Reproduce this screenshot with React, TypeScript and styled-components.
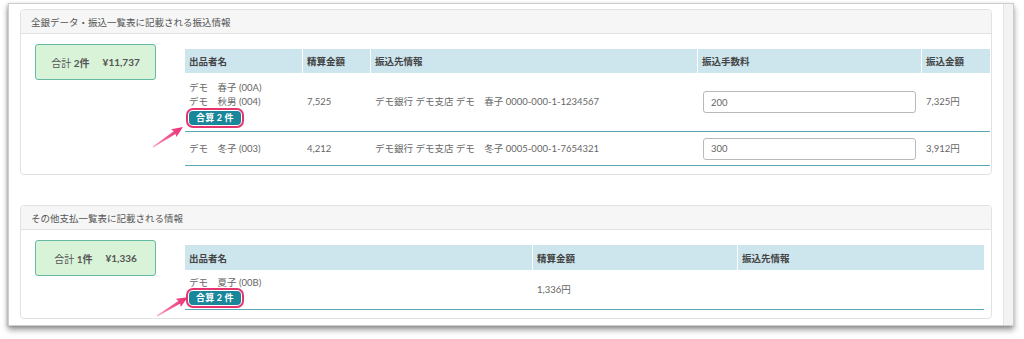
import React from 'react';
import styled, { createGlobalStyle } from 'styled-components';

const Global = createGlobalStyle`
  html, body { margin: 0; padding: 0; background: #fff; }
  body {
    font-family: Lato, "Noto Sans CJK JP", sans-serif;
    font-size: 9.5px;
    color: #666;
  }
  * { box-sizing: border-box; }
`;

const Stage = styled.div`
  position: relative;
  width: 1024px;
  height: 339px;
  overflow: hidden;
  padding: 3px 0 0 8px;
`;

const Frame = styled.div`
  width: 1006px;
  height: 323px;
  border: 1px solid #cdcdcd;
  background: #fff;
  box-shadow: 0 4px 6px rgba(0, 0, 0, 0.38), -1px 1px 3px rgba(0, 0, 0, 0.18);
  display: flex;
`;

const Content = styled.div`
  flex: 1;
  padding: 5px 11px 0 11px;
  display: flex;
  flex-direction: column;
  gap: 30px;
`;

const Scrollbar = styled.div`
  width: 10px;
  background: #f3f3f3;
  border-left: 1px solid #e4e4e4;
`;

const Panel = styled.section`
  border: 1px solid #e2e2e2;
  border-radius: 4px;
  background: #fff;
`;

const PanelHeader = styled.div`
  height: 24px;
  background: #f6f6f6;
  border-bottom: 1px solid #e2e2e2;
  border-radius: 4px 4px 0 0;
  padding: 0 10px;
  display: flex;
  align-items: center;
  color: #555;
`;

const PanelBody = styled.div`
  display: flex;
  align-items: flex-start;
  gap: 29px;
  padding: 10px 1px 8px 14px;
`;

const Summary = styled.div`
  width: 121px;
  height: 36px;
  flex: none;
  background: #d8f3d7;
  border: 1px solid #66b9a2;
  border-radius: 3px;
  display: flex;
  align-items: center;
  justify-content: center;
  gap: 13px;
  color: #555;
  font-size: 10px;
  b { font-weight: 700; }
`;

const Table = styled.table<{ $width: number }>`
  width: ${(p) => p.$width}px;
  margin-top: 5px;
  border-collapse: separate;
  border-spacing: 0;
  table-layout: fixed;
`;

const Th = styled.th<{ $h: number }>`
  height: ${(p) => p.$h}px;
  padding: 0 4px;
  background: #cde5ed;
  border-right: 1px solid #fff;
  text-align: left;
  font-weight: 700;
  color: #444;
  &:last-child { border-right: none; }
`;

const Row = styled.tr<{ $h: number }>`
  height: ${(p) => p.$h}px;
`;

const Td = styled.td`
  padding: 0 4px;
  vertical-align: middle;
  border-bottom: 1px solid #58a9b8;
  line-height: 14px;
  white-space: nowrap;
`;

const NameCell = styled(Td)<{ $pt: number }>`
  vertical-align: top;
  padding-top: ${(p) => p.$pt}px;
  padding-bottom: 0;
`;

const NameLine = styled.div`
  line-height: 14px;
`;

const Badge = styled.span<{ $mt: number }>`
  display: inline-flex;
  align-items: center;
  height: 14px;
  margin-top: ${(p) => p.$mt}px;
  padding: 0 7px;
  background: #19869a;
  color: #fff;
  font-weight: 700;
  font-size: 9px;
  border-radius: 4px;
  outline: 2px solid #e5356f;
  outline-offset: 1px;
  letter-spacing: 0.2px;
`;

const FeeInput = styled.input`
  display: block;
  width: 213px;
  height: 22px;
  margin-left: 1px;
  padding: 0 7px;
  border: 1px solid #b9b9b9;
  border-radius: 3px;
  font: inherit;
  color: #666;
  background: #fff;
`;

const Overlay = styled.svg`
  position: absolute;
  left: 0;
  top: 0;
  pointer-events: none;
`;

const Arrow = ({ x, y, angle, len }: { x: number; y: number; angle: number; len: number }) => (
  <g transform={`translate(${x} ${y}) rotate(${angle})`}>
    <polygon
      points={`0,-0.5 ${len - 10},-1.6 ${len - 11},-4.8 ${len},0 ${len - 11},4.8 ${len - 10},1.6 0,0.5`}
      fill="url(#pinkGrad)"
    />
  </g>
);

const rows1 = [
  {
    names: ['デモ　春子 (00A)', 'デモ　秋男 (004)'],
    badge: true,
    amount: '7,525',
    bank: 'デモ銀行 デモ支店 デモ　春子 0000-000-1-1234567',
    fee: '200',
    total: '7,325円',
    h: 59,
  },
  {
    names: ['デモ　冬子 (003)'],
    badge: false,
    amount: '4,212',
    bank: 'デモ銀行 デモ支店 デモ　冬子 0005-000-1-7654321',
    fee: '300',
    total: '3,912円',
    h: 34,
  },
];

export default function App() {
  return (
    <>
      <Global />
      <Stage>
        <Frame>
          <Content>
            <Panel>
              <PanelHeader>全銀データ・振込一覧表に記載される振込情報</PanelHeader>
              <PanelBody>
                <Summary>
                  <span>
                    合計 <b>2件</b>
                  </span>
                  <b>¥11,737</b>
                </Summary>
                <Table $width={805}>
                  <colgroup>
                    <col style={{ width: 118 }} />
                    <col style={{ width: 68 }} />
                    <col style={{ width: 327 }} />
                    <col style={{ width: 224 }} />
                    <col style={{ width: 68 }} />
                  </colgroup>
                  <thead>
                    <tr>
                      <Th $h={24}>出品者名</Th>
                      <Th $h={24}>精算金額</Th>
                      <Th $h={24}>振込先情報</Th>
                      <Th $h={24}>振込手数料</Th>
                      <Th $h={24}>振込金額</Th>
                    </tr>
                  </thead>
                  <tbody>
                    {rows1.map((r, i) => (
                      <Row key={i} $h={r.h}>
                        {r.badge ? (
                          <NameCell $pt={8}>
                            {r.names.map((n) => (
                              <NameLine key={n}>{n}</NameLine>
                            ))}
                            <Badge $mt={2}>合算 2 件</Badge>
                          </NameCell>
                        ) : (
                          <Td>{r.names[0]}</Td>
                        )}
                        <Td>{r.amount}</Td>
                        <Td>{r.bank}</Td>
                        <Td>
                          <FeeInput defaultValue={r.fee} />
                        </Td>
                        <Td>{r.total}</Td>
                      </Row>
                    ))}
                  </tbody>
                </Table>
              </PanelBody>
            </Panel>

            <Panel>
              <PanelHeader>その他支払一覧表に記載される情報</PanelHeader>
              <PanelBody>
                <Summary>
                  <span>
                    合計 <b>1件</b>
                  </span>
                  <b>¥1,336</b>
                </Summary>
                <Table $width={799}>
                  <colgroup>
                    <col style={{ width: 348 }} />
                    <col style={{ width: 205 }} />
                    <col style={{ width: 246 }} />
                  </colgroup>
                  <thead>
                    <tr>
                      <Th $h={25}>出品者名</Th>
                      <Th $h={25}>精算金額</Th>
                      <Th $h={25}>振込先情報</Th>
                    </tr>
                  </thead>
                  <tbody>
                    <Row $h={40}>
                      <NameCell $pt={6}>
                        <NameLine>デモ　夏子 (00B)</NameLine>
                        <Badge $mt={1}>合算 2 件</Badge>
                      </NameCell>
                      <Td>1,336円</Td>
                      <Td></Td>
                    </Row>
                  </tbody>
                </Table>
              </PanelBody>
            </Panel>
          </Content>
          <Scrollbar />
        </Frame>
        <Overlay width={1024} height={339} viewBox="0 0 1024 339">
          <defs>
            <linearGradient id="pinkGrad" x1="0" y1="0" x2="1" y2="0">
              <stop offset="0" stopColor="#f6a6c4" />
              <stop offset="0.5" stopColor="#f05a92" />
              <stop offset="1" stopColor="#ec2c74" />
            </linearGradient>
          </defs>
          <Arrow x={153} y={147} angle={-33.7} len={36} />
          <Arrow x={157} y={316} angle={-31.5} len={36} />
        </Overlay>
      </Stage>
    </>
  );
}
